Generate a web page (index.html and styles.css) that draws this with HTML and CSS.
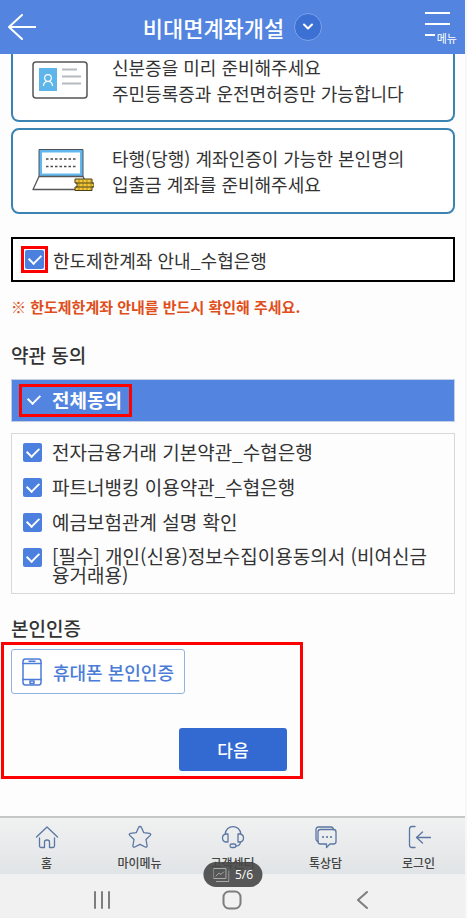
FILE: index.html
```html
<!DOCTYPE html>
<html lang="ko">
<head>
  <meta charset="UTF-8">
  <meta name="viewport" content="width=device-width, initial-scale=1">
  <title>비대면계좌개설</title>
  <link rel="stylesheet" href="styles.css">
</head>
<body>
  <div class="app">
    <header class="header">
      <button class="back" aria-label="뒤로">
        <svg width="28" height="26" viewBox="0 0 28 26"><path d="M14 1 1 13l13 12M1 13h27"/></svg>
      </button>
      <div class="title">
        <h1>비대면계좌개설</h1>
        <button class="more" aria-label="펼치기">
          <svg width="10" height="8" viewBox="0 0 10 8"><path d="m1 1.500 4 4 4-4"/></svg>
        </button>
      </div>
      <button class="menu">
        <span class="line"></span>
        <span class="line"></span>
        <span class="menu-row"><span class="line short"></span>메뉴</span>
      </button>
    </header>

    <main class="content">
      <div class="notice notice-cut">
        <svg class="notice-icon" width="62" height="50" viewBox="0 0 62 50">
          <rect x="1" y="7" width="54" height="36" rx="3" fill="#fff" stroke="#55565a" stroke-width="1.5"/>
          <rect x="7" y="13" width="18" height="23" fill="#5db5ea"/>
          <circle cx="16" cy="23" r="3.3" fill="none" stroke="#fff" stroke-width="1.2"/>
          <path d="M11.500 31c0-6 9-6 9 0" fill="none" stroke="#fff" stroke-width="1.2"/>
          <path d="M30 14.500h15M30 21.500h19M30 28.500h19" stroke="#b4bbc1" stroke-width="2"/>
        </svg>
        <p>신분증을 미리 준비해주세요<br>주민등록증과 운전면허증만 가능합니다</p>
      </div>
      <div class="notice">
        <svg class="notice-icon" width="62" height="50" viewBox="0 0 62 50">
          <rect x="7" y="3.500" width="44" height="27" fill="#62b8ee" stroke="#4b5158"/>
          <rect x="10" y="6.500" width="38" height="21" fill="#fff"/>
          <path d="M14 13h31M14 20.500h31" stroke="#4b4b4b" stroke-width="1.500" stroke-dasharray="2.500 2"/>
          <path d="M7 30.500h44l6 13H1z" fill="#fff" stroke="#55565a" stroke-width="1.300"/>
          <path d="M43 33h17v4h2v4h-2v3.500H43V41h2v-4h-2z" fill="#f1c737" stroke="#4b401d"/>
          <path d="M44 37h17M44 41h17" stroke="#4b401d"/>
          <path d="M47 33v11M51 33v11M55 33v11M59 33v11" stroke="#90711a" stroke-width=".7"/>
        </svg>
        <p>타행(당행) 계좌인증이 가능한 본인명의<br>입출금 계좌를 준비해주세요</p>
      </div>

      <div class="limit">
        <span class="mark"><input type="checkbox" id="limit" class="check" checked></span>
        <label for="limit">한도제한계좌 안내_수협은행</label>
      </div>
      <p class="warning">※ 한도제한계좌 안내를 반드시 확인해 주세요.</p>

      <h2>약관 동의</h2>
      <div class="agree-all">
        <label class="mark"><input type="checkbox" class="check" checked>전체동의</label>
      </div>
      <ul class="terms">
        <li><input type="checkbox" id="term1" class="check" checked><label for="term1">전자금융거래 기본약관_수협은행</label></li>
        <li><input type="checkbox" id="term2" class="check" checked><label for="term2">파트너뱅킹 이용약관_수협은행</label></li>
        <li><input type="checkbox" id="term3" class="check" checked><label for="term3">예금보험관계 설명 확인</label></li>
        <li><input type="checkbox" id="term4" class="check" checked><label for="term4">[필수] 개인(신용)정보수집이용동의서 (비여신금융거래용)</label></li>
      </ul>

      <h2 class="auth-title">본인인증</h2>
      <div class="auth">
        <button class="phone">
          <svg width="20" height="28" viewBox="0 0 20 28"><rect x="1" y="1" width="18" height="26" rx="2.500"/><path d="M1 5.500h18M1 21.500h18M7 3.300h6"/><rect x="8" y="23" width="4" height="2.500"/></svg>
          휴대폰 본인인증
        </button>
        <button class="next">다음</button>
      </div>
    </main>

    <footer class="footer">
      <nav class="tabs">
        <a href="#">
          <svg width="24" height="24" viewBox="0 0 24 24"><path d="M1.500 12 12 2l10.500 10M4.500 13v8q0 1.500 1.500 1.500h3.500V17q0-2 2.500-2t2.500 2v5.500H18q1.500 0 1.500-1.500v-8"/></svg>
          홈
        </a>
        <a href="#">
          <svg width="24" height="24" viewBox="0 0 24 24"><path d="M12 1.500q1 0 1.400 1l2.400 5.200 5.700.7q2 .5.700 2L18 14.500l1.100 6q.1 2.200-1.900 1.500L12 19.300 6.800 22q-2 .7-1.900-1.500l1.100-6-4.200-4.100q-1.300-1.500.7-2l5.700-.7 2.400-5.200q.4-1 1.400-1z"/></svg>
          마이메뉴
        </a>
        <a href="#">
          <svg width="24" height="24" viewBox="0 0 24 24"><path d="M4 9.500C5 -1 19 -1 20 9.500M7 9v8H5q-3.500-.5-3.500-4T5 9zM17 9v8h2q3.500-.5 3.500-4T19 9zM19.500 17q-.5 4-4.500 4"/><rect x="9" y="19" width="6" height="3.500" rx="1.750"/></svg>
          고객센터
        </a>
        <a href="#">
          <svg width="24" height="24" viewBox="0 0 24 24"><path d="M6.500 4.500h13q2.500 0 2.500 2.500v9.500q0 2.500-2.500 2.500H16l-3.500 3.500V19h-6Q4 19 4 16.500V7q0-2.500 2.500-2.500z"/><path d="M4 16.500q-2-.5-2-2.500V4.500Q2 2 4.500 2H17q2 0 2.500 2.500"/><path d="M9 12h.1M13 12h.1M17 12h.1" stroke-width="2"/></svg>
          톡상담
        </a>
        <a href="#">
          <svg width="24" height="24" viewBox="0 0 24 24"><path d="M8 1.500H5Q2.500 1.500 2.500 4v16Q2.500 22.500 5 22.500h3M23.500 12.500H9.500M15.500 7l-6 5.500 6 5.500"/></svg>
          로그인
        </a>
      </nav>
      <div class="system">
        <button aria-label="최근 앱"><svg width="20" height="20" viewBox="0 0 20 20"><path d="M3 2v16M10 2v16M17 2v16"/></svg></button>
        <button aria-label="홈 화면"><svg width="20" height="20" viewBox="0 0 20 20"><rect x="1.500" y="1.500" width="17" height="17" rx="5.500"/></svg></button>
        <button aria-label="이전"><svg width="20" height="20" viewBox="0 0 20 20"><path d="m14 2-9 8 9 8"/></svg></button>
      </div>
      <div class="counter">
        <svg width="16" height="14" viewBox="0 0 16 14"><rect x=".5" y=".5" width="12" height="10"/><path d="M3 13.500h12.500V3M2.500 8l3-3 2 1.500L10 4"/></svg>
        5/6
      </div>
    </footer>
  </div>
</body>
</html>
```

FILE: styles.css
```css
* {
  box-sizing: border-box;
}

body {
  margin: 0;
  background: #f7f7f7;
  color: #333;
  font-family: "Noto Sans CJK KR", sans-serif;
}

button {
  font-family: inherit;
  border: none;
  background: none;
  padding: 0;
  cursor: pointer;
}

svg {
  display: block;
  flex: none;
  fill: none;
  stroke-linecap: round;
  stroke-linejoin: round;
}

h1, h2, p, ul {
  margin: 0;
  padding: 0;
}

.app {
  display: flex;
  flex-direction: column;
  min-height: 100vh;
  margin-right: 2px;
  background: #fdfdfd;
}

/* header */
.header {
  display: grid;
  grid-template-columns: 1fr auto 1fr;
  align-items: center;
  height: 54px;
  padding: 0 8px;
  background: #5284e0;
  color: #fff;
}

.back {
  justify-self: start;
}

.back svg {
  stroke: #fff;
  stroke-width: 2;
}

.title {
  display: flex;
  align-items: center;
  gap: 10px;
}

h1 {
  font-size: 22px;
  font-weight: 500;
  line-height: 28px;
}

.more {
  display: grid;
  place-items: center;
  width: 28px;
  height: 28px;
  border: 1px solid #7ba3ec;
  border-radius: 50%;
  background: #3d70d3;
}

.more svg {
  stroke: #fff;
  stroke-width: 2;
}

.menu {
  display: flex;
  flex-direction: column;
  justify-self: end;
  gap: 9px;
  color: #fff;
  font-size: 11px;
  line-height: 8px;
}

.line {
  width: 25px;
  height: 2px;
  background: #fff;
}

.short {
  width: 10px;
}

.menu-row {
  display: flex;
  gap: 2px;
}

/* content */
.content {
  padding: 0 10px 0 11px;
}

.notice {
  display: flex;
  align-items: center;
  gap: 18px;
  height: 86px;
  margin-bottom: 23px;
  padding-left: 19px;
  border: 2px solid #3b83b3;
  border-radius: 8px;
  background: #fff;
  font-size: 18px;
  line-height: 26px;
}

.notice-cut {
  height: 68px;
  margin-bottom: 6px;
  padding-bottom: 14px;
  border-top: none;
  border-radius: 0 0 8px 8px;
}

.notice-icon {
  stroke-linecap: butt;
}

.check {
  appearance: none;
  display: grid;
  place-items: center;
  flex: none;
  width: 19px;
  height: 19px;
  margin: 0;
  border-radius: 2px;
  background: #4b80df;
}

.check:checked::before {
  content: "";
  width: 10px;
  height: 6px;
  margin-bottom: 3px;
  border-left: 2px solid #fff;
  border-bottom: 2px solid #fff;
  transform: rotate(-45deg);
}

.mark {
  display: flex;
  align-items: center;
  border: 3px solid #f00;
}

.limit {
  display: flex;
  align-items: center;
  gap: 5px;
  height: 45px;
  padding-left: 8px;
  border: 2px solid #000;
  background: #fff;
  font-size: 18px;
  line-height: 22px;
}

.limit .mark {
  padding: 1px;
}

.warning {
  margin-top: 13px;
  color: #e04e1b;
  font-size: 15px;
  font-weight: 700;
  line-height: 24px;
}

h2 {
  margin: 22px 0 10px;
  font-size: 19px;
  font-weight: 500;
  line-height: 28px;
}

.agree-all {
  display: flex;
  align-items: center;
  height: 43px;
  padding-left: 7px;
  border: 1px solid #c3cfe4;
  background: #5284e0;
  color: #fff;
  font-size: 19px;
  font-weight: 700;
  line-height: 22px;
}

.agree-all .mark {
  gap: 9px;
  height: 33px;
  padding: 0 7px 2px 2px;
}

.agree-all .check {
  background: none;
}

.terms {
  display: grid;
  gap: 13px;
  margin-top: 11px;
  padding: 7px 18px 9px 11px;
  border: 1px solid #d8d8d8;
  list-style: none;
  font-size: 19px;
  line-height: 22px;
}

.terms li {
  display: flex;
  gap: 10px;
}

.terms .check {
  margin-top: 2px;
}

.terms li:last-child {
  line-height: 19px;
}

/* phone verification */
.auth-title {
  margin: 20px 0 0;
}

.auth {
  display: flex;
  flex-direction: column;
  align-items: flex-start;
  gap: 34px;
  width: 302px;
  margin-left: -10px;
  padding: 4px 13px 5px 7px;
  border: 3px solid #f00;
}

.phone {
  display: flex;
  align-items: center;
  gap: 11px;
  height: 45px;
  padding: 0 10px;
  border: 1px solid #92b2df;
  border-radius: 3px;
  background: #fff;
  color: #4b7cd7;
  font-size: 18px;
  font-weight: 500;
}

.phone svg {
  stroke: #4b7cd7;
  stroke-width: 1.5;
}

.next {
  align-self: flex-end;
  width: 108px;
  height: 43px;
  border-radius: 3px;
  background: #326ad1;
  color: #fff;
  font-size: 17px;
  font-weight: 500;
}

/* bottom bars */
.footer {
  position: relative;
  margin-top: auto;
  background: #f1f1f1;
}

.tabs {
  display: flex;
  justify-content: space-around;
  height: 58px;
  border-top: 2px solid #c6c7c7;
  background: linear-gradient(#f0f1f1, #e1e4e6);
}

.tabs a {
  display: flex;
  flex: 1;
  flex-direction: column;
  align-items: center;
  gap: 6px;
  padding-top: 7px;
  color: #444;
  font-size: 12px;
  font-weight: 500;
  line-height: 16px;
  text-decoration: none;
}

.tabs svg {
  stroke: #5b76a3;
  stroke-width: 1.3;
}

.system {
  display: flex;
  align-items: center;
  justify-content: space-around;
  height: 44px;
  padding: 8px 37px 0;
}

.system svg {
  stroke: #7d7d7d;
  stroke-width: 2;
}

.counter {
  position: absolute;
  top: 46px;
  left: 50%;
  display: flex;
  align-items: center;
  gap: 6px;
  height: 25px;
  padding: 0 9px 0 10px;
  border-radius: 13px;
  background: rgba(70, 70, 70, 0.9);
  color: #fff;
  font-family: "Open Sans", sans-serif;
  font-size: 12px;
  transform: translateX(-50%);
}

.counter svg {
  stroke: #aaa;
}
```
